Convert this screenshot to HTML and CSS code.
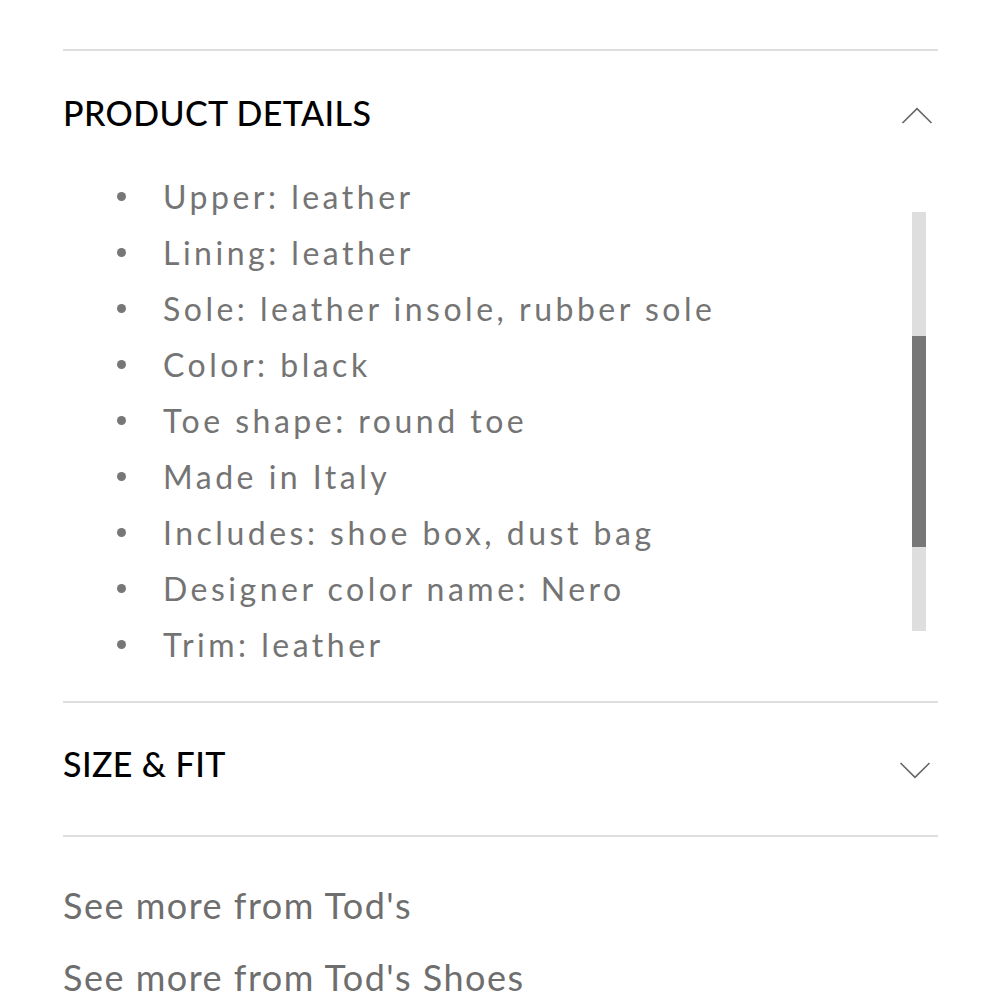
FILE: index.html
```html
<!DOCTYPE html>
<html lang="en">
<head>
<meta charset="utf-8">
<title>Product details</title>
<link rel="stylesheet" href="styles.css">
</head>
<body>
<div class="page">
  <section class="acc open">
    <div class="acc-head">
      <h2 class="acc-title">PRODUCT DETAILS</h2>
      <svg class="chev" width="32" height="18" viewBox="0 0 32 18"><polyline points="1.5,16 16,1.7 30.5,16" fill="none" stroke="#666" stroke-width="1.6"/></svg>
    </div>
    <div class="acc-body">
      <ul class="details">
        <li>Upper: leather</li>
        <li>Lining: leather</li>
        <li>Sole: leather insole, rubber sole</li>
        <li>Color: black</li>
        <li>Toe shape: round toe</li>
        <li>Made in Italy</li>
        <li>Includes: shoe box, dust bag</li>
        <li>Designer color name: Nero</li>
        <li>Trim: leather</li>
      </ul>
      <div class="scroll-track"><div class="scroll-thumb"></div></div>
    </div>
  </section>
  <section class="acc">
    <div class="acc-head closed">
      <h2 class="acc-title">SIZE &amp; FIT</h2>
      <svg class="chev" width="32" height="18" viewBox="0 0 32 18"><polyline points="1.5,2 16,16.3 30.5,2" fill="none" stroke="#666" stroke-width="1.6"/></svg>
    </div>
  </section>
  <nav class="more">
    <a href="#">See more from Tod's</a>
    <a href="#">See more from Tod's Shoes</a>
  </nav>
</div>
</body>
</html>
```
FILE: styles.css
```css
html, body {
  margin: 0;
  padding: 0;
  background: #fff;
}
body {
  font-family: "Lato", "Open Sans", sans-serif;
}
.page {
  padding: 49px 62px 0 63px;
}
.acc {
  border-top: 2px solid #dedede;
}
.acc-head {
  display: flex;
  align-items: center;
  justify-content: space-between;
  height: 124px;
  padding-bottom: 4px;
}
.acc-head.closed {
  height: 122px;
  padding-bottom: 10px;
}
.acc-title {
  margin: 0;
  font-size: 34px;
  font-weight: 500;
  letter-spacing: 0.4px;
  color: #000;
  line-height: 1;
}
.chev {
  display: block;
  margin-right: 5px;
  margin-top: 6px;
}
.acc-head.closed .chev {
  margin-top: 12px;
  margin-right: 7px;
}
.acc-body {
  display: flex;
  justify-content: space-between;
  padding-bottom: 29px;
  margin-top: -11px;
}
.details {
  list-style: none;
  margin: 0;
  padding: 0;
}
.details li {
  display: flex;
  align-items: center;
  height: 56px;
  font-size: 32px;
  letter-spacing: 3.5px;
  color: #747474;
}
.details li::before {
  content: "";
  width: 9px;
  height: 9px;
  border-radius: 50%;
  background: #777;
  margin: 0 37px 0 54px;
  flex: none;
}
.scroll-track {
  width: 14px;
  height: 419px;
  margin-top: 44px;
  margin-right: 12px;
  background: #dedede;
  display: flex;
  flex-direction: column;
}
.scroll-thumb {
  width: 14px;
  height: 211px;
  margin-top: 124px;
  background: #777;
}
.more {
  border-top: 2px solid #dedede;
  display: flex;
  flex-direction: column;
  padding-top: 32px;
}
.more a {
  color: #6e6e6e;
  text-decoration: none;
  font-size: 36px;
  letter-spacing: 1.5px;
  line-height: 72px;
  height: 72px;
  display: block;
}
```
